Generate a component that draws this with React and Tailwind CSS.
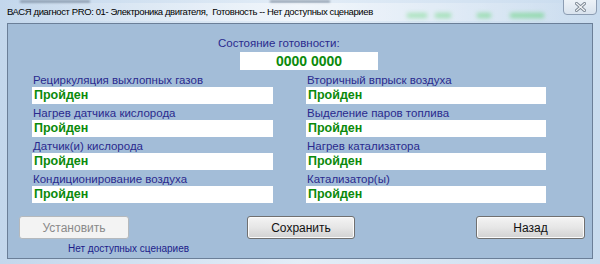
import React from "react";

const Label = ({ children }) => (
  <div className="h-[13px] leading-[13px] text-[11.5px] text-[#2a2a8e] pl-[1px] whitespace-nowrap">{children}</div>
);

const Field = ({ children }) => (
  <div className="h-[17px] bg-white flex items-center pl-[2px] text-[12.5px] font-bold text-[#0b8a0b] leading-none">{children}</div>
);

const Item = ({ label }) => (
  <div className="flex flex-col">
    <Label>{label}</Label>
    <Field>Пройден</Field>
  </div>
);

const Btn = ({ children, disabled, className }) => (
  <div
    className={
      "h-[23px] rounded-[3px] border flex items-center justify-center text-[12px] " +
      (disabled
        ? "border-[#b5b9bd] bg-[#f3f3f3] text-[#8a8a8a] "
        : "border-[#707070] bg-gradient-to-b from-[#f4f4f4] via-[#e6e6e6] to-[#d2d2d2] text-[#111] shadow-[inset_0_0_0_1px_#fbfbfb] ") +
      className
    }
  >
    {children}
  </div>
);

export default function App() {
  return (
    <div
      className="w-[600px] h-[264px] overflow-hidden relative bg-gradient-to-r from-[#c3d7ec] via-[#e3edf7] to-[#c8dbee]"
      style={{ fontFamily: '"Liberation Sans", Arial, sans-serif' }}
    >
      {/* blurred background shapes seen through the glass */}
      <div className="absolute left-[20px] top-[0px] w-[70px] h-[3px] bg-[#5b6a7c] blur-[1px] opacity-50" />
      <div className="absolute left-[270px] top-[0px] w-[60px] h-[3px] bg-[#5b6a7c] blur-[1px] opacity-50" />
      <div className="absolute left-[407px] top-[13px] w-[20px] h-[5px] bg-[#5fcf7a] blur-[2px] opacity-70" />
      <div className="absolute left-[435px] top-[13px] w-[16px] h-[5px] bg-[#5fcf7a] blur-[2px] opacity-70" />
      <div className="absolute left-[477px] top-[13px] w-[14px] h-[5px] bg-[#5fcf7a] blur-[2px] opacity-70" />
      <div className="absolute left-[510px] top-[13px] w-[34px] h-[5px] bg-[#5fcf7a] blur-[2px] opacity-70" />
      <div className="absolute left-[0px] top-[3px] w-[600px] h-[18px] bg-gradient-to-r from-transparent via-white/50 to-transparent" />

      {/* close button */}
      <div className="absolute left-[563px] top-[-2px] w-[34px] h-[17px] rounded-b-[4px] border border-[#8c9db3] bg-gradient-to-b from-[#eef3f8] to-[#d9e3ee] flex items-center justify-center">
        <svg width="11" height="10" viewBox="0 0 11 10">
          <path d="M1.5 1.5 L9.5 8.5 M9.5 1.5 L1.5 8.5" stroke="#7d8894" strokeWidth="3" strokeLinecap="square" />
          <path d="M1.5 1.5 L9.5 8.5 M9.5 1.5 L1.5 8.5" stroke="#f4f6f8" strokeWidth="1.2" strokeLinecap="square" />
        </svg>
      </div>

      <div className="relative flex flex-col">
        {/* title */}
        <div className="h-[23px] pl-[7px] pt-[1px] flex items-center text-[9.5px] tracking-[-0.4px] text-black whitespace-nowrap">
          ВАСЯ диагност PRO: 01- Электроника двигателя,&nbsp; Готовность -- Нет доступных сценариев
        </div>

        {/* client */}
        <div className="ml-[7px] w-[586px] h-[236px] border border-[#6b7f98] bg-[#a3bdd8] flex flex-col">
          <div className="mt-[12px] h-[14px] leading-[14px] text-[11.5px] text-[#2a2a8e] pl-[210px]">Состояние готовности:</div>
          <div className="mt-[2px] ml-[232px] w-[138px] h-[18px] bg-white flex items-center justify-center text-[14px] font-bold text-[#0b8a0b]">
            0000 0000
          </div>
          <div className="mt-[4px] ml-[24px] grid grid-cols-[241px_240px] gap-x-[33px] gap-y-[3px]">
            <Item label="Рециркуляция выхлопных газов" />
            <Item label="Вторичный впрыск воздуха" />
            <Item label="Нагрев датчика кислорода" />
            <Item label="Выделение паров топлива" />
            <Item label="Датчик(и) кислорода" />
            <Item label="Нагрев катализатора" />
            <Item label="Кондиционирование воздуха" />
            <Item label="Катализатор(ы)" />
          </div>
          <div className="mt-[13px] flex">
            <Btn disabled className="ml-[11px] w-[110px]">Установить</Btn>
            <Btn className="ml-[118px] w-[108px]">Сохранить</Btn>
            <Btn className="ml-[121px] w-[109px]">Назад</Btn>
          </div>
          <div className="mt-[4px] ml-[60px] text-[10px] leading-[12px] text-[#1c1c8a]">Нет доступных сценариев</div>
        </div>
      </div>
    </div>
  );
}
